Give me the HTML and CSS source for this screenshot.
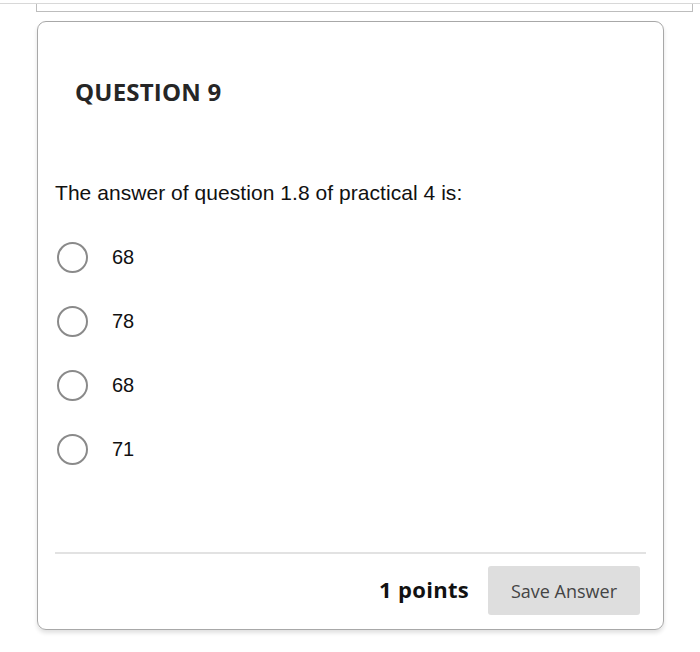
FILE: index.html
```html
<!DOCTYPE html>
<html>
<head>
<meta charset="utf-8">
<link rel="stylesheet" href="styles.css">
</head>
<body>
<div class="topbar"><div class="topbox"></div></div>
<div class="card">
  <h2 class="qtitle">QUESTION 9</h2>
  <p class="qtext">The answer of question 1.8 of practical 4 is:</p>
  <ul class="options">
    <li class="option"><span class="radio"></span><span class="label">68</span></li>
    <li class="option"><span class="radio"></span><span class="label">78</span></li>
    <li class="option"><span class="radio"></span><span class="label">68</span></li>
    <li class="option"><span class="radio"></span><span class="label">71</span></li>
  </ul>
  <div class="footer">
    <span class="points">1 points</span>
    <button class="save">Save Answer</button>
  </div>
</div>
</body>
</html>
```
FILE: styles.css
```css
html, body {
  margin: 0;
  padding: 0;
  background: #fff;
}
body {
  width: 700px;
  height: 652px;
  overflow: hidden;
  font-family: "Liberation Sans", Arial, sans-serif;
}
.topbar {
  margin-top: 3px;
  border-top: 1px solid #d8d8d8;
}
.topbox {
  margin-left: 36px;
  width: 655px;
  height: 7px;
  border: 1px solid #bdbdbd;
  border-top: none;
}
.card {
  margin-left: 37px;
  margin-top: 9px;
  width: 591px;
  height: 607px;
  border: 1.5px solid #a8a8a8;
  border-radius: 9px;
  box-shadow: 0 3px 4px rgba(0,0,0,0.12);
  display: flex;
  flex-direction: column;
  padding: 0 17px;
  box-sizing: content-box;
}
.qtitle {
  margin: 54px 0 0 20px;
  font-family: "Open Sans", sans-serif;
  font-weight: 700;
  font-size: 24px;
  line-height: 32px;
  color: #262626;
  letter-spacing: 0.2px;
}
.qtext {
  margin: 73px 0 0 0;
  font-size: 21px;
  line-height: 24px;
  color: #111;
  letter-spacing: 0.05px;
}
.options {
  list-style: none;
  margin: 35px 0 0 0;
  padding: 0;
  display: flex;
  flex-direction: column;
  gap: 30px;
}
.option {
  display: flex;
  align-items: center;
  height: 34px;
}
.radio {
  width: 27px;
  height: 27px;
  border: 2.5px solid #8a8a8a;
  border-radius: 50%;
  margin-left: 2px;
  flex: none;
}
.label {
  margin-left: 24px;
  font-size: 20px;
  color: #111;
}
.footer {
  margin-top: auto;
  margin-bottom: 14px;
  border-top: 2px solid #e2e2e2;
  padding-top: 12px;
  display: flex;
  justify-content: flex-end;
  align-items: center;
  gap: 19px;
}
.points {
  font-family: "Open Sans", sans-serif;
  font-weight: 700;
  font-size: 22px;
  letter-spacing: 0.3px;
  color: #111;
  position: relative;
  top: -2px;
}
.save {
  width: 152px;
  height: 49px;
  margin-right: 6px;
  background: #dedede;
  border: none;
  border-radius: 3px;
  font-family: "Open Sans", sans-serif;
  font-size: 18px;
  color: #444;
  padding: 0;
}
```
